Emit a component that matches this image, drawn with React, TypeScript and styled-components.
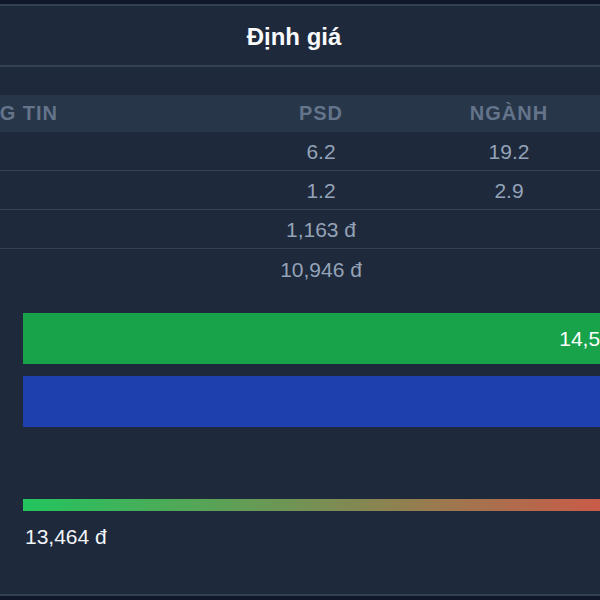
import React from 'react';
import styled, { createGlobalStyle } from 'styled-components';

const GlobalStyle = createGlobalStyle`
  html, body {
    margin: 0;
    padding: 0;
    background: #0f172a;
    overflow: hidden;
    font-family: 'Liberation Sans', Arial, sans-serif;
  }
`;

const Page = styled.div`
  width: 600px;
  height: 600px;
  overflow: hidden;
  padding-top: 4px;
  box-sizing: border-box;
`;

const Panel = styled.section`
  width: 918px;
  height: 592px;
  margin-left: -165px;
  box-sizing: border-box;
  background: #1e293b;
  border-top: 2px solid #334155;
  border-bottom: 2px solid #334155;
  display: flex;
  flex-direction: column;
`;

const Header = styled.header`
  height: 61px;
  padding-top: 2px;
  box-sizing: border-box;
  display: flex;
  align-items: center;
  justify-content: center;
  border-bottom: 2px solid #334155;
`;

const Title = styled.h2`
  margin: 0;
  font-size: 24px;
  font-weight: 700;
  color: #f8fafc;
`;

const Table = styled.div`
  margin: 28px 24px 0;
  display: flex;
  flex-direction: column;
`;

const Row = styled.div<{ $head?: boolean; $last?: boolean }>`
  display: grid;
  grid-template-columns: 368px 188px 188px 1fr;
  align-items: center;
  box-sizing: border-box;
  height: ${({ $head }) => ($head ? '37px' : '39px')};
  padding-top: ${({ $head }) => ($head ? '0' : '2px')};
  background: ${({ $head }) => ($head ? '#283649' : 'transparent')};
  border-bottom: ${({ $head, $last }) =>
    $head || $last ? 'none' : '1px solid #334155'};
`;

const HeadCell = styled.div<{ $left?: boolean }>`
  font-size: 20px;
  font-weight: 700;
  letter-spacing: 1px;
  color: #64748b;
  text-transform: uppercase;
  text-align: ${({ $left }) => ($left ? 'left' : 'center')};
  padding-left: ${({ $left }) => ($left ? '80px' : '0')};
`;

const Cell = styled.div<{ $left?: boolean }>`
  font-size: 21px;
  color: #94a3b8;
  text-align: ${({ $left }) => ($left ? 'left' : 'center')};
  padding-left: ${({ $left }) => ($left ? '80px' : '0')};
`;

const Chart = styled.div`
  display: grid;
  grid-template-columns: 164px 1fr;
  padding: 25px 24px 0;
  row-gap: 12px;
`;

const Label = styled.div`
  font-size: 16px;
  color: #94a3b8;
`;

const Bar = styled.div<{ $color: string }>`
  height: 51px;
  background: ${({ $color }) => $color};
  display: flex;
  align-items: center;
  justify-content: flex-end;
  padding-right: 16px;
  box-sizing: border-box;
  font-size: 21px;
  color: #ffffff;
`;

const Scale = styled.div`
  display: grid;
  grid-template-columns: 164px 1fr;
  padding: 72px 24px 0;
`;

const Gradient = styled.div`
  height: 12px;
  background: linear-gradient(90deg, #22c55e 0%, #ef4444 100%);
`;

const Current = styled.div`
  margin-top: 14px;
  padding-left: 2px;
  font-size: 21px;
  line-height: 24px;
  color: #f1f5f9;
`;

const rows = [
  { name: 'P/E', psd: '6.2', nganh: '19.2' },
  { name: 'P/B', psd: '1.2', nganh: '2.9' },
  { name: 'EPS', psd: '1,163 đ', nganh: '' },
  { name: 'BVPS', psd: '10,946 đ', nganh: '' },
];

const bars = [
  { key: 'pe', color: '#18a34a', width: 634, value: '14,562 đ' },
  { key: 'pb', color: '#1e40af', width: 706, value: '13,135 đ' },
];

export default function App() {
  return (
    <>
      <GlobalStyle />
      <Page>
        <Panel>
          <Header>
            <Title>Định giá</Title>
          </Header>
          <Table>
            <Row $head>
              <HeadCell $left>Thông tin</HeadCell>
              <HeadCell>PSD</HeadCell>
              <HeadCell>Ngành</HeadCell>
              <HeadCell />
            </Row>
            {rows.map((r, i) => (
              <Row key={r.name} $last={i === rows.length - 1}>
                <Cell $left>{r.name}</Cell>
                <Cell>{r.psd}</Cell>
                <Cell>{r.nganh}</Cell>
                <Cell />
              </Row>
            ))}
          </Table>
          <Chart>
            {bars.map((b) => (
              <React.Fragment key={b.key}>
                <Label />
                <div>
                  <Bar $color={b.color} style={{ width: b.width }}>
                    {b.value}
                  </Bar>
                </div>
              </React.Fragment>
            ))}
          </Chart>
          <Scale>
            <Label />
            <div>
              <Gradient />
              <Current>13,464 đ</Current>
            </div>
          </Scale>
        </Panel>
      </Page>
    </>
  );
}
